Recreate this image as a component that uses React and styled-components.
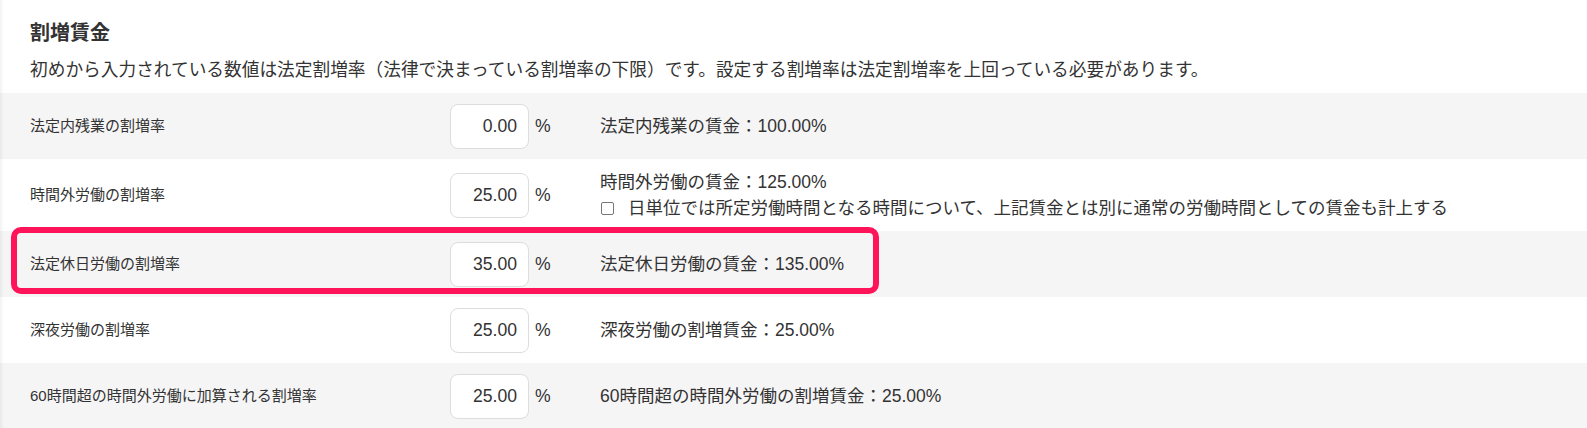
import React from 'react';
import styled, { createGlobalStyle } from 'styled-components';

const GlobalStyle = createGlobalStyle`
    body {
        margin: 0;
        background: #ffffff;
        font-family: "Liberation Sans", "Noto Sans CJK JP", sans-serif;
        color: #333333;
    }
`
const Page = styled.div`
    position: relative;
    width: 1587px;
    height: 428px;
    overflow: hidden;
    background: #ffffff;

    &::before {
        content: "";
        position: absolute;
        left: 0;
        top: 0;
        bottom: 0;
        width: 4px;
        background: linear-gradient(to right, rgba(0, 0, 0, 0.05), rgba(0, 0, 0, 0));
        z-index: 1;
    }
`
const Header = styled.div`
    padding: 18px 30px 10px;
`
const Title = styled.h2`
    margin: 0 0 9px;
    font-size: 20px;
    line-height: 30px;
    font-weight: 700;
    color: #333333;
`
const Lead = styled.p`
    margin: 0;
    font-size: 17.7px;
    line-height: 26px;
    color: #333333;
`
const Row = styled.div`
    display: grid;
    grid-template-columns: 420px 79px 6px 16px 49px 1fr;
    align-items: center;
    min-height: 46px;
    padding: 10px 0 10px 30px;
    background: ${({ striped }) => striped ? "#f6f5f6" : "#ffffff"};
`
const Label = styled.div`
    font-size: 15px;
    line-height: 22px;
`
const RateInput = styled.div`
    grid-column: 2;
    box-sizing: border-box;
    width: 79px;
    height: 45px;
    display: flex;
    align-items: center;
    justify-content: flex-end;
    padding-right: 11px;
    background: #ffffff;
    border: 1px solid #dddddd;
    border-radius: 8px;
    font-size: 17.6px;
`
const Unit = styled.span`
    grid-column: 4;
    font-size: 17.6px;
`
const Result = styled.div`
    grid-column: 6;
    font-size: 17.5px;
    line-height: 26px;
`
const CheckLine = styled.label`
    display: flex;
    align-items: center;
`
const Check = styled.span`
    box-sizing: border-box;
    width: 13px;
    height: 13px;
    margin: 0 14px 0 1px;
    border: 1px solid #767676;
    border-radius: 2px;
    background: #ffffff;
`
const Highlight = styled.div`
    position: absolute;
    left: 11px;
    top: 227px;
    width: 868px;
    height: 67px;
    box-sizing: border-box;
    border: 6px solid #ff1459;
    border-radius: 10px;
    pointer-events: none;
`

const rates = [
    { id: 0, label: "法定内残業の割増率", value: "0.00", result: "法定内残業の賃金：100.00%" },
    { id: 1, label: "時間外労働の割増率", value: "25.00", result: "時間外労働の賃金：125.00%", check: "日単位では所定労働時間となる時間について、上記賃金とは別に通常の労働時間としての賃金も計上する" },
    { id: 2, label: "法定休日労働の割増率", value: "35.00", result: "法定休日労働の賃金：135.00%" },
    { id: 3, label: "深夜労働の割増率", value: "25.00", result: "深夜労働の割増賃金：25.00%" },
    { id: 4, label: "60時間超の時間外労働に加算される割増率", value: "25.00", result: "60時間超の時間外労働の割増賃金：25.00%" },
]

const App = () => (
    <Page>
        <GlobalStyle />
        <Header>
            <Title>割増賃金</Title>
            <Lead>初めから入力されている数値は法定割増率（法律で決まっている割増率の下限）です。設定する割増率は法定割増率を上回っている必要があります。</Lead>
        </Header>
        {rates.map((rate, i) => (
            <Row key={rate.id} striped={i % 2 === 0}>
                <Label>{rate.label}</Label>
                <RateInput>{rate.value}</RateInput>
                <Unit>%</Unit>
                <Result>
                    <div>{rate.result}</div>
                    {rate.check && (
                        <CheckLine>
                            <Check />
                            {rate.check}
                        </CheckLine>
                    )}
                </Result>
            </Row>
        ))}
        <Highlight />
    </Page>
)

export default App;
